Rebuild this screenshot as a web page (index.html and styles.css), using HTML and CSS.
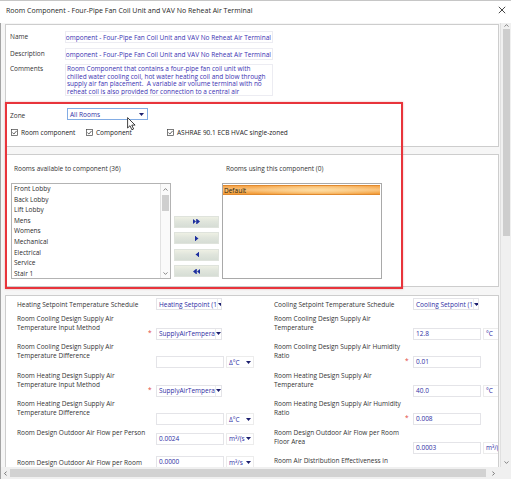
FILE: index.html
```html
<!DOCTYPE html>
<html>
<head>
<meta charset="utf-8">
<title>Room Component</title>
<link rel="stylesheet" href="styles.css">
</head>
<body>
<div class="window">
  <div class="titlebar">
    <span class="title">Room Component - Four-Pipe Fan Coil Unit and VAV No Reheat Air Terminal</span>
    <svg class="close" width="8" height="8" viewBox="0 0 8 8"><path d="M0.8 0.8 L7.2 7.2 M7.2 0.8 L0.8 7.2" stroke="#333" stroke-width="0.9"/></svg>
  </div>
  <div class="main">
    <div class="content">
      <section class="box general">
        <div class="frow name-row">
          <span class="flabel">Name</span>
          <div class="tfield"><span>Room Component - Four-Pipe Fan Coil Unit and VAV No Reheat Air Terminal</span></div>
        </div>
        <div class="frow desc-row">
          <span class="flabel">Description</span>
          <div class="tfield"><span>Room Component - Four-Pipe Fan Coil Unit and VAV No Reheat Air Terminal</span></div>
        </div>
        <div class="frow">
          <span class="flabel comments-label">Comments</span>
          <div class="tarea">Room Component that contains a four-pipe fan coil unit with<br>chilled water cooling coil, hot water heating coil and blow through<br>supply air fan placement.&nbsp; A variable air volume terminal with no<br>reheat coil is also provided for connection to a central air</div>
        </div>
        <div class="zone-row">
          <span class="zone-label">Zone</span>
          <div class="zone-select"><span>All Rooms</span><svg width="5" height="3" viewBox="0 0 5 3"><path d="M0 0H5L2.5 3Z" fill="#1c1f6e"/></svg></div>
        </div>
        <div class="check-row">
          <label class="check"><svg width="7" height="7" viewBox="0 0 7 7"><rect x="0.5" y="0.5" width="6" height="6" fill="#fff" stroke="#444" stroke-width="0.7"/><path d="M1.4 3.6 L2.9 5 L5.6 1.9" fill="none" stroke="#333" stroke-width="0.8"/></svg><span>Room component</span></label>
          <label class="check"><svg width="7" height="7" viewBox="0 0 7 7"><rect x="0.5" y="0.5" width="6" height="6" fill="#fff" stroke="#444" stroke-width="0.7"/><path d="M1.4 3.6 L2.9 5 L5.6 1.9" fill="none" stroke="#333" stroke-width="0.8"/></svg><span>Component</span></label>
          <label class="check"><svg width="7" height="7" viewBox="0 0 7 7"><rect x="0.5" y="0.5" width="6" height="6" fill="#fff" stroke="#444" stroke-width="0.7"/><path d="M1.4 3.6 L2.9 5 L5.6 1.9" fill="none" stroke="#333" stroke-width="0.8"/></svg><span>ASHRAE 90.1 ECB HVAC single-zoned</span></label>
        </div>
      </section>

      <section class="box rooms">
        <div class="rooms-grid">
          <div class="list-label left">Rooms available to component (36)</div>
          <div></div>
          <div class="list-label right">Rooms using this component (0)</div>
          <div class="listbox">
            <ul class="items">
              <li>Front Lobby</li>
              <li>Back Lobby</li>
              <li>Lift Lobby</li>
              <li>Mens</li>
              <li>Womens</li>
              <li>Mechanical</li>
              <li>Electrical</li>
              <li>Service</li>
              <li>Stair 1</li>
            </ul>
            <div class="lscroll">
              <svg width="5" height="3" viewBox="0 0 5 3"><path d="M0.5 2.6 L2.5 0.6 L4.5 2.6" fill="none" stroke="#555" stroke-width="0.7"/></svg>
              <div class="lthumb"></div>
              <div class="lspacer"></div>
              <svg width="5" height="3" viewBox="0 0 5 3"><path d="M0.5 0.4 L2.5 2.4 L4.5 0.4" fill="none" stroke="#555" stroke-width="0.7"/></svg>
            </div>
          </div>
          <div class="move-buttons">
            <div class="mbtn"><svg width="7" height="5" viewBox="0 0 7 5"><path d="M0 0 L3 2.5 L0 5Z M3.2 0 H4 V5 H3.2Z M4 0 L7 2.5 L4 5Z" fill="#1d2f9e"/></svg></div>
            <div class="mbtn"><svg width="4" height="5" viewBox="0 0 4 5"><path d="M0 0 H0.8 V5 H0Z M0.8 0.5 L3.5 2.5 L0.8 4.5Z" fill="#1d2f9e"/></svg></div>
            <div class="mbtn"><svg width="4" height="5" viewBox="0 0 4 5"><path d="M4 0 H3.2 V5 H4Z M3.2 0.5 L0.5 2.5 L3.2 4.5Z" fill="#1d2f9e"/></svg></div>
            <div class="mbtn"><svg width="7" height="5" viewBox="0 0 7 5"><path d="M7 0 L4 2.5 L7 5Z M3.8 0 H3 V5 H3.8Z M3 0 L0 2.5 L3 5Z" fill="#1d2f9e"/></svg></div>
          </div>
          <div class="listbox used">
            <ul class="items">
              <li class="selected">Default</li>
            </ul>
          </div>
        </div>
      </section>

      <section class="box props">
        <div class="prow first">
          <div class="pcell center">
            <span class="plabel">Heating Setpoint Temperature Schedule</span><span class="req"></span>
            <div class="pselect"><span>Heating Setpoint (1</span><i class="arr"><svg width="5" height="3" viewBox="0 0 5 3"><path d="M0 0H5L2.5 3Z" fill="#1c1f6e"/></svg></i></div>
          </div>
          <div class="pcell center">
            <span class="plabel">Cooling Setpoint Temperature Schedule</span><span class="req"></span>
            <div class="pselect"><span>Cooling Setpoint (1</span><i class="arr"><svg width="5" height="3" viewBox="0 0 5 3"><path d="M0 0H5L2.5 3Z" fill="#1c1f6e"/></svg></i></div>
          </div>
        </div>
        <div class="prow">
          <div class="pcell">
            <span class="plabel">Room Cooling Design Supply Air<br>Temperature Input Method</span><span class="req">*</span>
            <div class="pselect"><span>SupplyAirTempera</span><i class="arr"><svg width="5" height="3" viewBox="0 0 5 3"><path d="M0 0H5L2.5 3Z" fill="#1c1f6e"/></svg></i></div>
          </div>
          <div class="pcell">
            <span class="plabel">Room Cooling Design Supply Air<br>Temperature</span><span class="req"></span>
            <div class="pinput">12.8</div><div class="unit">°C</div>
          </div>
        </div>
        <div class="prow">
          <div class="pcell">
            <span class="plabel">Room Cooling Design Supply Air<br>Temperature Difference</span><span class="req"></span>
            <div class="pinput"></div><div class="unit"><span>Δ°C</span><svg width="5" height="3" viewBox="0 0 5 3"><path d="M0 0H5L2.5 3Z" fill="#1c1f6e"/></svg></div>
          </div>
          <div class="pcell">
            <span class="plabel">Room Cooling Design Supply Air Humidity<br>Ratio</span><span class="req">*</span>
            <div class="pinput">0.01</div>
          </div>
        </div>
        <div class="prow">
          <div class="pcell">
            <span class="plabel">Room Heating Design Supply Air<br>Temperature Input Method</span><span class="req">*</span>
            <div class="pselect"><span>SupplyAirTempera</span><i class="arr"><svg width="5" height="3" viewBox="0 0 5 3"><path d="M0 0H5L2.5 3Z" fill="#1c1f6e"/></svg></i></div>
          </div>
          <div class="pcell">
            <span class="plabel">Room Heating Design Supply Air<br>Temperature</span><span class="req"></span>
            <div class="pinput">40.0</div><div class="unit">°C</div>
          </div>
        </div>
        <div class="prow">
          <div class="pcell">
            <span class="plabel">Room Heating Design Supply Air<br>Temperature Difference</span><span class="req"></span>
            <div class="pinput"></div><div class="unit"><span>Δ°C</span><svg width="5" height="3" viewBox="0 0 5 3"><path d="M0 0H5L2.5 3Z" fill="#1c1f6e"/></svg></div>
          </div>
          <div class="pcell">
            <span class="plabel">Room Heating Design Supply Air Humidity<br>Ratio</span><span class="req">*</span>
            <div class="pinput">0.008</div>
          </div>
        </div>
        <div class="prow">
          <div class="pcell">
            <span class="plabel">Room Design Outdoor Air Flow per Person</span><span class="req"></span>
            <div class="pinput">0.0024</div><div class="unit"><span>m³/(s</span><svg width="5" height="3" viewBox="0 0 5 3"><path d="M0 0H5L2.5 3Z" fill="#1c1f6e"/></svg></div>
          </div>
          <div class="pcell">
            <span class="plabel">Room Design Outdoor Air Flow per Room<br>Floor Area</span><span class="req"></span>
            <div class="pinput">0.0003</div><div class="unit">m³/(s</div>
          </div>
        </div>
        <div class="prow">
          <div class="pcell center">
            <span class="plabel">Room Design Outdoor Air Flow per Room</span><span class="req"></span>
            <div class="pinput">0.0000</div><div class="unit"><span>m³/s</span><svg width="5" height="3" viewBox="0 0 5 3"><path d="M0 0H5L2.5 3Z" fill="#1c1f6e"/></svg></div>
          </div>
          <div class="pcell top">
            <span class="plabel">Room Air Distribution Effectiveness in<br>Cooling Mode</span>
          </div>
        </div>
      </section>
    </div>
    <div class="vscroll">
      <svg class="sarrow" width="5" height="3" viewBox="0 0 5 3"><path d="M0.5 2.6 L2.5 0.6 L4.5 2.6" fill="none" stroke="#555" stroke-width="0.7"/></svg>
      <div class="vthumb"></div>
      <div class="vspacer"></div>
      <svg class="sarrow" width="5" height="3" viewBox="0 0 5 3"><path d="M0.5 0.4 L2.5 2.4 L4.5 0.4" fill="none" stroke="#555" stroke-width="0.7"/></svg>
    </div>
  </div>
  <div class="hscroll">
    <div class="htrack">
      <svg width="3" height="5" viewBox="0 0 3 5"><path d="M2.6 0.5 L0.6 2.5 L2.6 4.5" fill="none" stroke="#444" stroke-width="0.7"/></svg>
      <div class="hthumb"></div>
      <svg width="3" height="5" viewBox="0 0 3 5"><path d="M0.4 0.5 L2.4 2.5 L0.4 4.5" fill="none" stroke="#444" stroke-width="0.7"/></svg>
    </div>
    <div class="corner"></div>
  </div>

  <div class="highlight"></div>
  <svg class="cursor" width="10" height="14" viewBox="0 0 10 14"><path d="M0.6 0.6 L0.6 11 L3 8.7 L4.9 12.8 L6.6 12 L4.8 8.1 L8.1 8.1 Z" fill="#fff" stroke="#111" stroke-width="0.8" stroke-linejoin="round"/></svg>
</div>
</body>
</html>
```

FILE: styles.css
```css
* { box-sizing: border-box; }
html, body { margin: 0; padding: 0; }
body {
  width: 511px;
  height: 479px;
  overflow: hidden;
  background: #fff;
  font-family: "Open Sans", "Noto Sans", sans-serif;
  font-size: 6.5px;
  color: #333;
}
ul { margin: 0; padding: 0; list-style: none; }

.window {
  position: relative;
  width: 511px;
  height: 479px;
  display: flex;
  flex-direction: column;
  border-top: 1px solid #c6c6c6;
}

/* title bar */
.titlebar {
  height: 22px;
  flex-shrink: 0;
  display: flex;
  align-items: flex-start;
  justify-content: space-between;
  padding: 4px 5px 0 6px;
  background: #fff;
}
.title { font-size: 7px; line-height: 11px; color: #1f1f1f; }
.close { margin-top: 1px; }

/* main area */
.main {
  flex: 1;
  min-height: 0;
  display: flex;
  border-left: 1px solid #a4a4a4;
  background: #f6f6f6;
}
.content {
  width: 499px;
  padding: 1px 0 0 4px;
  overflow: hidden;
  display: flex;
  flex-direction: column;
}
.box {
  width: 494px;
  flex-shrink: 0;
  background: #fff;
  border: 1px solid #cdcdcd;
}

/* general box */
.general { height: 123px; padding: 6px 0 0 4px; margin-bottom: 7px; }
.frow { display: flex; align-items: flex-start; }
.name-row { margin-bottom: 5px; }
.desc-row { margin-bottom: 4px; }
.flabel { width: 55px; line-height: 12px; color: #333; }
.comments-label { line-height: 10px; }
.tfield {
  width: 208px;
  height: 12px;
  border: 1px solid #ececf2;
  overflow: hidden;
  white-space: nowrap;
  display: flex;
  justify-content: flex-end;
  align-items: center;
  padding-right: 1px;
  color: #3a32b2;
}
.tfield span { flex-shrink: 0; }
.tarea {
  width: 208px;
  height: 32px;
  border: 1px solid #ececf2;
  overflow: hidden;
  white-space: nowrap;
  padding: 0 1px;
  line-height: 7.7px;
  color: #3a32b2;
}
.zone-row { display: flex; align-items: center; margin-top: 12px; }
.zone-label { width: 57px; padding-top: 3px; }
.zone-select {
  width: 81px;
  height: 12px;
  border: 1px solid #82ace4;
  background: #fff;
  display: flex;
  align-items: center;
  justify-content: space-between;
  padding: 0 3px 0 2px;
  color: #2f2fa6;
}
.check-row {
  display: grid;
  grid-template-columns: 75px 81px auto;
  margin-top: 8px;
  padding-left: 1px;
}
.check { display: flex; align-items: center; gap: 3px; color: #222; line-height: 9px; }
.check svg { flex-shrink: 0; }

/* rooms box */
.rooms { height: 133px; padding: 9px 0 0 5px; margin-bottom: 8px; }
.rooms-grid {
  display: grid;
  grid-template-columns: 160px 45px 160px;
  grid-template-rows: 9px 96px;
  column-gap: 3px;
  row-gap: 10px;
}
.list-label { line-height: 9px; color: #333; white-space: nowrap; }
.list-label.left { padding-left: 3px; }
.list-label.right { padding-left: 4px; }
.listbox {
  border: 1px solid #b3b3b3;
  background: #fff;
  display: flex;
  overflow: hidden;
}
.items { flex: 1; padding: 0 0 0 2px; }
.items li { line-height: 10.6px; height: 10.6px; color: #2b2b2b; white-space: nowrap; }
.used { border-color: #a9a9a9; }
.used .items { padding: 1px 1px 0 0; }
.items li.selected {
  padding-left: 1px;
  height: 9.5px;
  line-height: 9.5px;
  color: #2a1a05;
  background:
    radial-gradient(ellipse 45% 80% at 60% 50%, rgba(255, 226, 170, 0.85), rgba(255, 226, 170, 0) 100%),
    linear-gradient(to bottom, #f6a54a, #f9c27c 50%, #f29a35);
  border: 1px solid #e08a2e;
  border-width: 1px 0;
}
.lscroll {
  width: 10px;
  border-left: 1px solid #e2e2e2;
  background: #fafafa;
  display: flex;
  flex-direction: column;
  align-items: center;
  padding: 4px 0 3px;
}
.lthumb { width: 7px; height: 16px; margin-top: 4px; background: #cfcfcf; }
.lspacer { flex: 1; }
.move-buttons {
  display: flex;
  flex-direction: column;
  justify-content: flex-end;
  gap: 4.5px;
  padding-bottom: 2px;
}
.mbtn {
  height: 12px;
  display: flex;
  align-items: center;
  justify-content: center;
  background: linear-gradient(to bottom, #eef0e4, #e0e5dc 45%, #d6ddd5);
  border: 1px solid #dfe3dc;
}

/* properties box */
.props { height: 200px; padding-top: 2px; overflow: hidden; }
.prow { display: flex; align-items: flex-start; margin-bottom: 2.5px; }
.prow.first { height: 14px; margin-bottom: 1.5px; }
.pcell {
  width: 257px;
  flex-shrink: 0;
  display: flex;
  align-items: flex-end;
  padding-left: 11px;
}
.pcell.center { align-items: center; }
.pcell.top { align-items: flex-start; }
.plabel {
  width: 129px;
  flex-shrink: 0;
  line-height: 9px;
  margin-bottom: 8px;
  white-space: nowrap;
  color: #333;
}
.pcell.center .plabel, .pcell.top .plabel { margin-bottom: 0; }
.req {
  width: 10px;
  flex-shrink: 0;
  padding-left: 2px;
  margin-bottom: 3px;
  color: #e2473f;
  line-height: 9px;
}
.pselect {
  width: 66px;
  height: 12px;
  flex-shrink: 0;
  border: 1px solid #e4e4e8;
  background: #fff;
  display: flex;
  align-items: center;
  justify-content: space-between;
  padding-left: 2px;
  color: #2e2ea4;
  white-space: nowrap;
  overflow: hidden;
}
.pselect .arr {
  width: 9px;
  height: 10px;
  border-left: 1px solid #ececec;
  display: flex;
  align-items: center;
  justify-content: center;
}
.pinput {
  width: 68px;
  height: 12px;
  flex-shrink: 0;
  border: 1px solid #e4e4e8;
  background: #fff;
  padding-left: 2px;
  line-height: 10px;
  color: #2e2ea4;
}
.unit {
  width: 28px;
  height: 12px;
  flex-shrink: 0;
  margin-left: 2px;
  border: 1px solid #ececec;
  background: #fff;
  display: flex;
  align-items: center;
  justify-content: space-between;
  padding: 0 2px 0 2px;
  color: #2e2ea4;
  white-space: nowrap;
  overflow: hidden;
}

/* scrollbars */
.vscroll {
  width: 11px;
  flex-shrink: 0;
  background: #f0f0f0;
  border-left: 1px solid #e0e0e0;
  display: flex;
  flex-direction: column;
  align-items: center;
  padding: 1px 0 3px;
}
.vthumb { width: 7px; height: 207px; margin-top: 2px; background: #cdcdcd; }
.vspacer { flex: 1; }
.hscroll { height: 12px; flex-shrink: 0; display: flex; border-left: 1px solid #a4a4a4; }
.htrack {
  flex: 1;
  background: #f0f0f0;
  display: flex;
  align-items: center;
  padding: 0 5px 0 3px;
  gap: 3px;
}
.hthumb { flex: 1; height: 8px; background: #d2d2d2; margin-right: 3px; }
.corner { width: 11px; background: #f0f0f0; }

/* overlays */
.highlight {
  position: absolute;
  left: 5px;
  top: 101px;
  width: 398px;
  height: 187px;
  border: 2px solid #e8343b;
  box-shadow: 0 0 2px rgba(190, 40, 40, 0.35);
  pointer-events: none;
}
.cursor { position: absolute; left: 127px; top: 116px; }
```
